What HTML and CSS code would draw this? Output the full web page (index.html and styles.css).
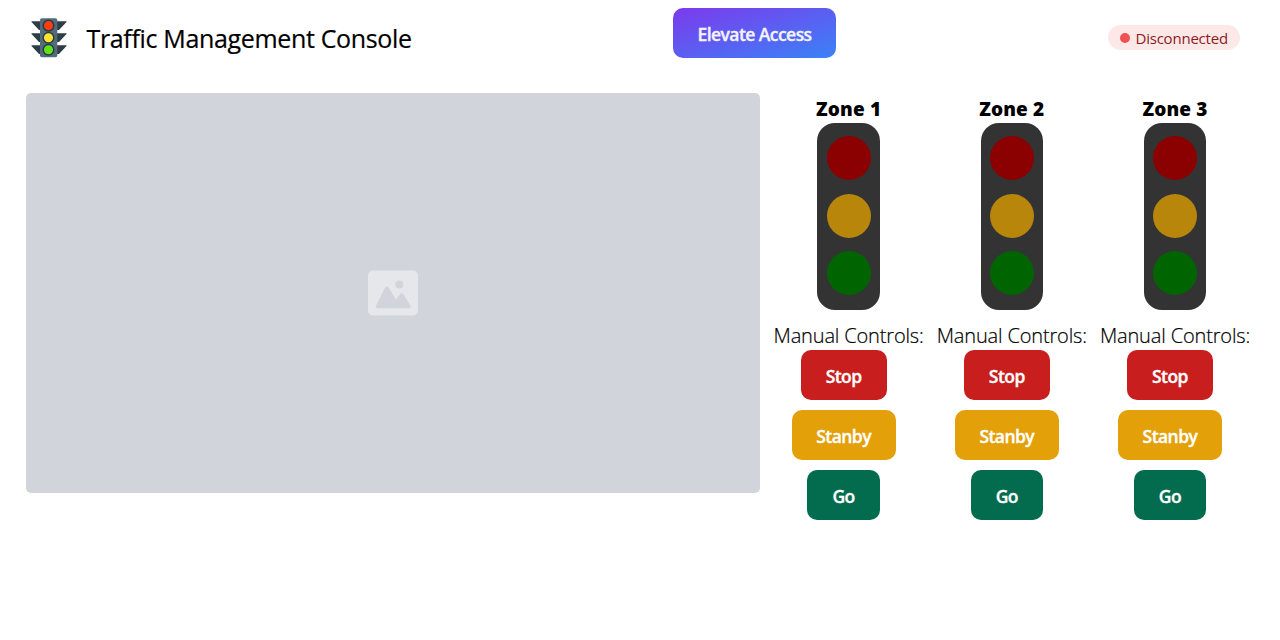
FILE: index.html
```html
<!DOCTYPE html>
<html lang="en">
<head>
<meta charset="utf-8">
<title>Traffic Management Console</title>
<link rel="stylesheet" href="styles.css">
</head>
<body>
<header class="topbar">
  <svg class="logo" viewBox="0 0 40 40" aria-hidden="true">
    <path fill="#2f3e46" d="M2.500 3.300h35v.8L30 12H10L2.500 4.100zM2.500 15.300h35v.8L30 24H10L2.500 16.100zM2.500 27.300h35v.8L30 36H10L2.500 28.100z"/>
    <rect x="11" y=".3" width="17.300" height="39" rx="2" fill="#536c79"/>
    <g stroke="#2b3b47" stroke-width="1.500">
      <circle cx="19.500" cy="7.600" r="5.300" fill="#ff3d0d"/>
      <circle cx="19.500" cy="19.800" r="5.300" fill="#ffe433"/>
      <circle cx="19.500" cy="31.800" r="5.300" fill="#5fe317"/>
    </g>
  </svg>
  <h1 class="title">Traffic Management Console</h1>
  <button class="btn elevate">Elevate Access</button>
  <div class="status"><span class="dot"></span><span class="status-text">Disconnected</span></div>
</header>
<main class="main">
  <div class="video">
    <svg class="placeholder" viewBox="0 0 50 46" aria-hidden="true">
      <rect y=".5" width="50" height="45" rx="5" fill="#e5e7eb"/>
      <circle cx="31.300" cy="14.500" r="4" fill="#d1d5db"/>
      <path fill="#d1d5db" d="M9.500 38.300c-1.500 0-2.200-1.300-1.500-2.600l9.200-18.200c.8-1.500 2.700-1.500 3.500 0l7.300 12.200 4-5.500c.9-1.200 2.500-1.200 3.400 0l7.100 11.500c.8 1.300.1 2.600-1.400 2.600z"/>
    </svg>
  </div>
  <section class="zones">
    <div class="zone">
      <h2 class="zone-name">Zone 1</h2>
      <div class="light"><span class="lamp red"></span><span class="lamp amber"></span><span class="lamp green"></span></div>
      <p class="label">Manual Controls:</p>
      <div class="controls"><button class="btn stop">Stop</button><button class="btn standby">Stanby</button><button class="btn go">Go</button></div>
    </div>
    <div class="zone">
      <h2 class="zone-name">Zone 2</h2>
      <div class="light"><span class="lamp red"></span><span class="lamp amber"></span><span class="lamp green"></span></div>
      <p class="label">Manual Controls:</p>
      <div class="controls"><button class="btn stop">Stop</button><button class="btn standby">Stanby</button><button class="btn go">Go</button></div>
    </div>
    <div class="zone">
      <h2 class="zone-name">Zone 3</h2>
      <div class="light"><span class="lamp red"></span><span class="lamp amber"></span><span class="lamp green"></span></div>
      <p class="label">Manual Controls:</p>
      <div class="controls"><button class="btn stop">Stop</button><button class="btn standby">Stanby</button><button class="btn go">Go</button></div>
    </div>
  </section>
</main>
</body>
</html>
```
FILE: styles.css
```css
* { box-sizing: border-box; }
body {
  margin: 0;
  background: #fff;
  color: #000;
  font-family: "Segoe UI", "Open Sans", "Noto Sans", sans-serif;
}
h1, h2, p { margin: 0; }
.topbar {
  display: flex;
  align-items: flex-start;
  height: 93px;
  padding: 8px 40px 0 29px;
}
.logo { width: 40px; height: 40px; margin-top: 10px; }
.title {
  width: 586.5px;
  margin-left: 17.5px;
  padding-top: 12px;
  font-size: 25px;
  line-height: 36px;
  font-weight: 400;
  letter-spacing: -0.34px;
  white-space: nowrap;
  -webkit-text-stroke: 0.2px;
}
.btn {
  display: block;
  height: 50px;
  padding: 2px 0 0;
  border: 0;
  border-radius: 10px;
  color: #fff;
  font-family: inherit;
  font-size: 17.5px;
  font-weight: 600;
  line-height: 48px;
  letter-spacing: -0.55px;
  text-align: center;
  white-space: nowrap;
  -webkit-text-stroke: 0.35px;
}
.elevate {
  width: 163px;
  padding-top: 1px;
  color: #f5f3ff;
  background: linear-gradient(to bottom right, #7c3aed, #3b82f6);
}
.status {
  display: flex;
  align-items: center;
  width: 132px;
  height: 25px;
  margin: 17px 0 0 auto;
  padding-left: 12px;
  border-radius: 13px;
  background: #fde8e8;
}
.dot { width: 10px; height: 10px; border-radius: 50%; background: #f05252; }
.status-text {
  margin-left: 5.5px;
  color: #8b1a1f;
  font-size: 15px;
  line-height: 24px;
  letter-spacing: -0.22px;
}
.main { display: flex; padding-left: 26px; }
.video {
  display: flex;
  align-items: center;
  justify-content: center;
  width: 734px;
  height: 400px;
  border-radius: 5px;
  background: #d1d5db;
}
.placeholder { width: 50px; height: 46px; }
.zones { display: flex; margin-left: 7px; }
.zone { display: flex; flex-direction: column; align-items: center; width: 163.2px; }
.zone-name {
  height: 30px;
  font-size: 19px;
  font-weight: 800;
  line-height: 32px;
  letter-spacing: 0.15px;
  white-space: nowrap;
}
.light {
  display: flex;
  flex-direction: column;
  align-items: center;
  gap: 13.5px;
  width: 62.5px;
  height: 187px;
  padding-top: 13px;
  border-radius: 18px;
  background: #333;
}
.lamp { width: 44px; height: 44px; border-radius: 50%; }
.red { background: #8b0000; }
.amber { background: #b8860b; }
.green { background: #006400; }
.label {
  height: 40px;
  padding-top: 11px;
  font-size: 20px;
  font-weight: 300;
  line-height: 30px;
  letter-spacing: -0.15px;
  white-space: nowrap;
  -webkit-text-stroke: 0.2px;
}
.controls {
  display: flex;
  flex-direction: column;
  align-items: center;
  gap: 10px;
  margin-right: 10px;
}
.stop { width: 86px; background: #c81e1e; }
.standby { width: 104px; background: #e3a008; }
.go { width: 72.5px; background: #046c4e; }
```
